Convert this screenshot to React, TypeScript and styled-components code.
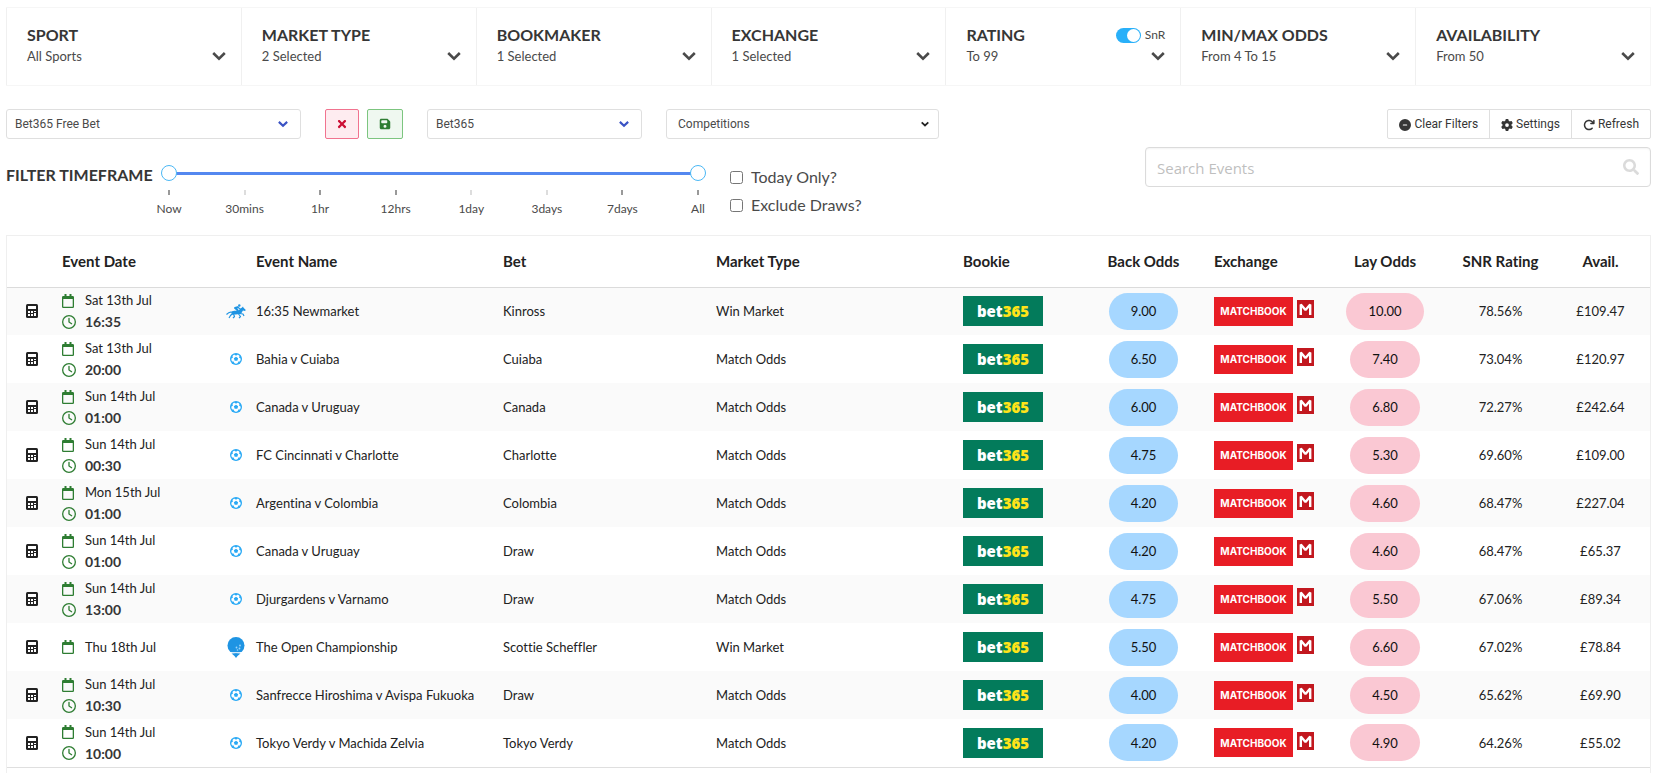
import React from 'react';
import styled, { createGlobalStyle, css } from 'styled-components';
import { FaTimes, FaSearch } from 'react-icons/fa';
import { FaCircleMinus, FaGear, FaFloppyDisk, FaArrowRotateRight, FaRegClock } from 'react-icons/fa6';

const GlobalStyle = createGlobalStyle`
  * { box-sizing: border-box; }
  body {
    margin: 0;
    background: #fff;
    color: #222;
    font: 13px/20px Lato, sans-serif;
    font-variant-ligatures: none;
  }
  button, input, select { font: inherit; color: inherit; margin: 0; }
`;

const Page = styled.main`
  padding: 7px 7px 0 6px;
`;

/* Filter cards */
const FilterBar = styled.section`
  display: grid;
  grid-template-columns: repeat(7, 1fr);
  height: 79px;
  border: 1px solid #f6f6f6;
  border-left: 0;
`;
const Card = styled.div`
  display: flex;
  justify-content: space-between;
  padding: 17px 15px 0 20px;
  border-left: 1px solid #f0f0f0;
`;
const CardTitle = styled.h2`
  margin: 0;
  font-size: 16px;
  line-height: 20px;
  font-weight: 700;
  color: #363636;
  white-space: nowrap;
`;
const CardValue = styled.p`
  margin: 0;
  font-size: 13px;
  line-height: 22px;
  color: #4a4a4a;
`;
const CardSide = styled.div`
  display: flex;
  flex-direction: column;
  align-items: flex-end;
`;
const SideTop = styled.div`
  height: 20px;
`;
const IconButton = styled.button`
  display: flex;
  align-items: center;
  height: 22px;
  padding: 0;
  border: 0;
  background: none;
  color: #4a4a4a;
  cursor: pointer;
`;
const SwitchLabel = styled.label`
  display: flex;
  align-items: center;
  gap: 4px;
  font-size: 12px;
  line-height: 20px;
  color: #4a4a4a;
`;
const Switch = styled.input`
  appearance: none;
  display: flex;
  width: 25px;
  height: 15px;
  padding: 1px;
  border-radius: 8px;
  background: #ccc;
  &::before {
    content: '';
    width: 13px;
    height: 13px;
    border-radius: 50%;
    background: #fff;
  }
  &:checked { background: #29b0f9; justify-content: flex-end; }
`;

/* Toolbar */
const Toolbar = styled.section`
  display: flex;
  align-items: center;
  margin-top: 23px;
  font: 12px/16px Roboto, sans-serif;
  color: #4a4a4a;
`;
const SelectWrap = styled.div<{ $width: number }>`
  position: relative;
  flex: 0 1 ${(p) => p.$width}px;
  margin-right: 24px;
`;
const Select = styled.select<{ $inset: number }>`
  appearance: none;
  display: block;
  width: 100%;
  height: 30px;
  padding: 0 28px 0 ${(p) => p.$inset}px;
  border: 1px solid #dfdfdf;
  border-radius: 3px;
  background: #fff;
`;
const SelectArrow = styled.span<{ $color: string; $right: number }>`
  position: absolute;
  top: 0;
  right: ${(p) => p.$right}px;
  height: 30px;
  display: flex;
  align-items: center;
  color: ${(p) => p.$color};
  pointer-events: none;
`;
const ToneButton = styled.button<{ $tone: 'red' | 'green' }>`
  display: flex;
  align-items: center;
  justify-content: center;
  width: ${(p) => (p.$tone === 'red' ? 34 : 36)}px;
  height: 30px;
  padding: 0;
  border-radius: 2px;
  ${(p) =>
    p.$tone === 'red'
      ? css`border: 1px solid #f1738f; background: #feecf0; color: #cc0f35;`
      : css`border: 1px solid #7cc57f; background: #eff8f0; color: #2e7d32;`}
`;
const ToneGroup = styled.div`
  display: flex;
  gap: 8px;
  margin-right: 24px;
`;
const Actions = styled.div`
  display: flex;
  margin-left: auto;
`;
const Action = styled.button`
  display: flex;
  align-items: center;
  gap: 3px;
  height: 30px;
  padding: 0 11px;
  border: 1px solid #dfdfdf;
  background: #fff;
  color: #363636;
  white-space: nowrap;
  svg { margin-top: 2px; }
  & + & { margin-left: -1px; }
  &:first-child { border-radius: 2px 0 0 2px; }
  &:last-child { border-radius: 0 2px 2px 0; }
`;

/* Timeframe */
const TimeRow = styled.section`
  display: flex;
  align-items: flex-start;
  height: 96px;
  padding-top: 8px;
`;
const TimeTitle = styled.h2`
  width: 155px;
  margin: 18px 0 0;
  font-size: 16px;
  line-height: 20px;
  font-weight: 700;
  color: #363636;
  white-space: nowrap;
`;
const Slider = styled.div`
  width: 545px;
  margin-top: 18px;
`;
const Track = styled.div`
  display: grid;
  align-items: center;
  height: 16px;
  background: linear-gradient(#5488f0, #5488f0) center / calc(100% - 16px) 3px no-repeat;
`;
const Range = styled.input`
  grid-area: 1 / 1;
  appearance: none;
  width: 100%;
  height: 16px;
  background: none;
  pointer-events: none;
  &::-webkit-slider-thumb {
    appearance: none;
    width: 16px;
    height: 16px;
    border: 1px solid #4bb8f5;
    border-radius: 50%;
    background: #fff;
    pointer-events: auto;
  }
`;
const Ticks = styled.ol`
  display: flex;
  justify-content: space-between;
  margin: 9px 0 0;
  padding: 0 8px;
  list-style: none;
`;
const Tick = styled.li<{ $strong: boolean }>`
  display: flex;
  flex-direction: column;
  align-items: center;
  gap: 6px;
  width: 0;
  font-size: 12px;
  line-height: 16px;
  color: #4a4a4a;
  &::before {
    content: '';
    width: 2px;
    height: 5px;
    background: ${(p) => (p.$strong ? '#999' : '#ddd')};
  }
`;
const Checks = styled.div`
  display: grid;
  gap: 8px;
  margin: 20px 0 0 24px;
`;
const Check = styled.label`
  display: flex;
  align-items: center;
  gap: 8px;
  font-size: 16px;
  line-height: 20px;
  color: #4a4a4a;
  input { width: 13px; height: 13px; }
`;
const Search = styled.label`
  display: flex;
  align-items: center;
  width: 506px;
  height: 40px;
  margin-left: auto;
  padding: 0 11px;
  border: 1px solid #dbdbdb;
  border-radius: 4px;
  color: #dbdbdb;
  box-shadow: inset 0 1px 2px rgba(10, 10, 10, 0.05);
`;
const SearchInput = styled.input`
  flex: 1;
  border: 0;
  padding: 2px 0 0;
  outline: 0;
  background: none;
  font: 15px/24px "Open Sans", sans-serif;
  color: #363636;
  &::placeholder { color: #bfbfbf; }
`;

/* Events table */
const TablePanel = styled.section`
  padding-bottom: 5px;
  border: 1px solid #efefef;
  border-bottom: 0;
`;
const Table = styled.table`
  width: 100%;
  table-layout: fixed;
  border-collapse: collapse;
`;
const Head = styled.th<{ $center?: boolean; $inset?: boolean }>`
  height: 51px;
  padding: 0 0 0 ${(p) => (p.$inset ? 30 : 0)}px;
  border-bottom: 1px solid #dbdbdb;
  text-align: ${(p) => (p.$center ? 'center' : 'left')};
  font-size: 15px;
  font-weight: 700;
  white-space: nowrap;
`;
const Row = styled.tr`
  height: 48px;
  &:nth-child(odd) { background: #fafafa; }
  &:last-child { border-bottom: 1px solid #dfdfdf; }
`;
const Cell = styled.td<{ $center?: boolean }>`
  padding: 0;
  text-align: ${(p) => (p.$center ? 'center' : 'left')};
  white-space: nowrap;
`;
const CalcButton = styled(IconButton)`
  margin-left: 19px;
  color: #222;
`;
const When = styled.div`
  display: flex;
  align-items: center;
  gap: 9px;
  line-height: 21px;
  svg { color: #2e7d32; }
`;
const Time = styled.time`
  font-size: 14px;
  font-weight: 700;
  color: #363636;
`;
const EventName = styled.div`
  display: flex;
  align-items: center;
  gap: 10px;
`;
const IconSlot = styled.span`
  display: flex;
  justify-content: center;
  width: 20px;
`;
const Pill = styled.button<{ $side: 'back' | 'lay' }>`
  height: 37px;
  padding: 0 22px;
  border: 0;
  border-radius: 19px;
  background: ${(p) => (p.$side === 'back' ? '#a6d7ff' : '#fac8d3')};
  color: #111;
`;
const Bookie = styled.div`
  display: flex;
  align-items: center;
  justify-content: center;
  width: 80px;
  height: 30px;
  background: #037b5b;
  color: #fff;
  font: 800 15px/20px "Open Sans", sans-serif;
  b { color: #ffe418; font-weight: 800; }
`;
const ExchangeLogos = styled.div`
  display: flex;
  align-items: center;
  gap: 4px;
  svg { margin-bottom: 4px; }
`;
const Matchbook = styled.span`
  display: flex;
  align-items: center;
  justify-content: center;
  width: 79px;
  height: 29px;
  background: #e81d25;
  color: #fff;
  font: 700 10px/14px Inter, sans-serif;
`;

const Chevron = ({ size, stroke = 2.6 }: { size: number; stroke?: number }) => (
  <svg width={size} height={size} viewBox="0 0 14 14" fill="none" stroke="currentColor" strokeWidth={stroke} aria-hidden>
    <path d="M1.2 4 7 9.6 12.8 4" />
  </svg>
);
const Calculator = () => (
  <svg width="12" height="14" viewBox="0 0 12 14" aria-hidden>
    <rect width="12" height="14" rx="1.5" fill="currentColor" />
    <path fill="#fff" d="M2 2h8v3H2ZM2 7h2v2H2ZM5 7h2v2H5ZM8 7h2v1H8ZM2 10h2v2H2ZM5 10h2v2H5ZM8 9h2v3H8Z" />
  </svg>
);
const Calendar = () => (
  <svg width="14" height="14" viewBox="0 0 14 14" aria-hidden>
    <path fill="currentColor" fillRule="evenodd" d="M2.500 0h2v2h3V0h2v2h1.200A1.300 1.300 0 0 1 12 3.300v9.400a1.300 1.300 0 0 1-1.300 1.300H1.300A1.300 1.300 0 0 1 0 12.700V3.300A1.300 1.300 0 0 1 1.300 2h1.200ZM1.300 5v7.700h9.400V5Z" />
  </svg>
);
const Football = () => (
  <svg width="12" height="12" viewBox="0 0 24 24" aria-label="Football">
    <circle cx="12" cy="12" r="12" fill="#29a9f5" />
    <circle cx="12" cy="12" r="9.400" fill="#fff" />
    <path fill="#29a9f5" d="m12 7.600 4.300 3.100-1.600 5H9.300l-1.600-5ZM7.400 2h9.200L12 5.400ZM1.200 11.500l2.900-8 1.700 6.200ZM22.800 11.500l-2.900-8-1.700 6.200ZM4 19.500l1.800-4 4.200 6.500ZM20 19.500l-1.800-4L14 22Z" />
  </svg>
);
const Horse = () => (
  <svg width="20" height="15" viewBox="0 0 20 15" aria-label="Horse racing">
    <g fill="#1e94e3">
      <path d="M5 8c2-1.500 4-1.200 6-1.200 2-.3 3-2.300 5-3.300l1-.9.5 1.200L19.800 6l-.8 1-2-.5c-1 1.500-1.500 3-3 3.500-3 .8-6 0-7.500 1Z" />
      <circle cx="13.300" cy="1.500" r="1.200" />
    </g>
    <g fill="none" stroke="#1e94e3" strokeLinejoin="round">
      <path strokeWidth="1.200" d="M5.500 8.300C3.500 7.500 2 9 .5 10.500M6.500 9.500l-2 2L3 14M7.500 10l1 2.500L7 14.200M13.500 9.500l3.500.5 1 2M12.500 10l2 2.500-1.500 1.700M12 3.500 14.500 5" />
      <path strokeWidth="1.900" d="M12.600 3 9 4l2.500 2-.7 2" />
    </g>
  </svg>
);
const Golf = () => (
  <svg width="18" height="21" viewBox="0 0 18 21" aria-label="Golf">
    <circle cx="9" cy="8.500" r="8.500" fill="#1e94e3" />
    <path fill="#fff" d="M3 15.200h12v1H3Z" />
    <path fill="#1e94e3" d="M4.500 16.500h9L10.500 19 9 21l-1.500-2Z" />
    <g fill="#9fd6fb"><circle cx="13" cy="8.500" r=".9" /><circle cx="9.500" cy="10.500" r=".9" /><circle cx="12.500" cy="11.500" r=".9" /><circle cx="10.500" cy="13" r=".8" /></g>
  </svg>
);
const MatchbookMark = () => (
  <svg width="17" height="18" viewBox="0 0 17 18" aria-hidden>
    <path fill="#c2181f" d="M0 0h17v18H0Z" />
    <path fill="none" stroke="#fff" strokeWidth="2.400" strokeLinejoin="bevel" d="M3.800 15V4.500l4.700 5.500 4.700-5.500V15" />
  </svg>
);

const sportIcons = { horse: <Horse />, football: <Football />, golf: <Golf /> };
type Sport = keyof typeof sportIcons;

const filters = [
  ['Sport', 'All Sports'],
  ['Market Type', '2 Selected'],
  ['Bookmaker', '1 Selected'],
  ['Exchange', '1 Selected'],
  ['Rating', 'To 99'],
  ['Min/Max Odds', 'From 4 To 15'],
  ['Availability', 'From 50'],
];
const stops = ['Now', '30mins', '1hr', '12hrs', '1day', '3days', '7days', 'All'];
const strongStops = ['Now', '1hr', '12hrs', '7days', 'All'];
const columnWidths = [55, 164, 277, 213, 247, 110, 141, 106, 130, 101, 99];

type EventRow = [string, string, Sport, string, string, string, string, string, string, string];
const events: EventRow[] = [
  ['Sat 13th Jul', '16:35', 'horse', '16:35 Newmarket', 'Kinross', 'Win Market', '9.00', '10.00', '78.56%', '£109.47'],
  ['Sat 13th Jul', '20:00', 'football', 'Bahia v Cuiaba', 'Cuiaba', 'Match Odds', '6.50', '7.40', '73.04%', '£120.97'],
  ['Sun 14th Jul', '01:00', 'football', 'Canada v Uruguay', 'Canada', 'Match Odds', '6.00', '6.80', '72.27%', '£242.64'],
  ['Sun 14th Jul', '00:30', 'football', 'FC Cincinnati v Charlotte', 'Charlotte', 'Match Odds', '4.75', '5.30', '69.60%', '£109.00'],
  ['Mon 15th Jul', '01:00', 'football', 'Argentina v Colombia', 'Colombia', 'Match Odds', '4.20', '4.60', '68.47%', '£227.04'],
  ['Sun 14th Jul', '01:00', 'football', 'Canada v Uruguay', 'Draw', 'Match Odds', '4.20', '4.60', '68.47%', '£65.37'],
  ['Sun 14th Jul', '13:00', 'football', 'Djurgardens v Varnamo', 'Draw', 'Match Odds', '4.75', '5.50', '67.06%', '£89.34'],
  ['Thu 18th Jul', '', 'golf', 'The Open Championship', 'Scottie Scheffler', 'Win Market', '5.50', '6.60', '67.02%', '£78.84'],
  ['Sun 14th Jul', '10:30', 'football', 'Sanfrecce Hiroshima v Avispa Fukuoka', 'Draw', 'Match Odds', '4.00', '4.50', '65.62%', '£69.90'],
  ['Sun 14th Jul', '10:00', 'football', 'Tokyo Verdy v Machida Zelvia', 'Tokyo Verdy', 'Match Odds', '4.20', '4.90', '64.26%', '£55.02'],
];

export default function App() {
  return (
    <Page>
      <GlobalStyle />
      <FilterBar>
        {filters.map(([title, value]) => (
          <Card key={title}>
            <div>
              <CardTitle>{title.toUpperCase()}</CardTitle>
              <CardValue>{value}</CardValue>
            </div>
            <CardSide>
              <SideTop>
                {title === 'Rating' && (
                  <SwitchLabel>
                    <Switch type="checkbox" role="switch" defaultChecked />
                    SnR
                  </SwitchLabel>
                )}
              </SideTop>
              <IconButton aria-label={`Open ${title}`}><Chevron size={14} /></IconButton>
            </CardSide>
          </Card>
        ))}
      </FilterBar>

      <Toolbar>
        <SelectWrap $width={295}>
          <Select $inset={8} aria-label="Saved filter"><option>Bet365 Free Bet</option></Select>
          <SelectArrow $color="#3b53c4" $right={13}><Chevron size={10} stroke={3} /></SelectArrow>
        </SelectWrap>
        <ToneGroup>
          <ToneButton $tone="red" aria-label="Delete filter"><FaTimes size={12} /></ToneButton>
          <ToneButton $tone="green" aria-label="Save filter"><FaFloppyDisk size={12} /></ToneButton>
        </ToneGroup>
        <SelectWrap $width={215}>
          <Select $inset={8} aria-label="Bookmaker"><option>Bet365</option></Select>
          <SelectArrow $color="#3b53c4" $right={13}><Chevron size={10} stroke={3} /></SelectArrow>
        </SelectWrap>
        <SelectWrap $width={273}>
          <Select $inset={11} aria-label="Competitions"><option>Competitions</option></Select>
          <SelectArrow $color="#222" $right={10}><Chevron size={8} stroke={3} /></SelectArrow>
        </SelectWrap>
        <Actions>
          <Action><FaCircleMinus size={12} />Clear Filters</Action>
          <Action><FaGear size={12} />Settings</Action>
          <Action><FaArrowRotateRight size={12} />Refresh</Action>
        </Actions>
      </Toolbar>

      <TimeRow>
        <TimeTitle>FILTER TIMEFRAME</TimeTitle>
        <Slider>
          <Track>
            <Range type="range" min={0} max={7} defaultValue={0} aria-label="Timeframe start" />
            <Range type="range" min={0} max={7} defaultValue={7} aria-label="Timeframe end" />
          </Track>
          <Ticks>
            {stops.map((s) => <Tick key={s} $strong={strongStops.includes(s)}>{s}</Tick>)}
          </Ticks>
        </Slider>
        <Checks>
          <Check><input type="checkbox" />Today Only?</Check>
          <Check><input type="checkbox" />Exclude Draws?</Check>
        </Checks>
        <Search>
          <SearchInput type="text" placeholder="Search Events" aria-label="Search Events" />
          <FaSearch size={16} />
        </Search>
      </TimeRow>

      <TablePanel>
        <Table>
          <colgroup>{columnWidths.map((w, i) => <col key={i} width={w} />)}</colgroup>
          <thead>
            <tr>
              <Head aria-label="Calculator" />
              <Head>Event Date</Head>
              <Head $inset>Event Name</Head>
              <Head>Bet</Head>
              <Head>Market Type</Head>
              <Head>Bookie</Head>
              <Head $center>Back Odds</Head>
              <Head>Exchange</Head>
              <Head $center>Lay Odds</Head>
              <Head $center>SNR Rating</Head>
              <Head $center>Avail.</Head>
            </tr>
          </thead>
          <tbody>
            {events.map(([date, time, sport, name, bet, market, back, lay, rating, avail]) => (
              <Row key={name + bet}>
                <Cell><CalcButton aria-label="Calculator"><Calculator /></CalcButton></Cell>
                <Cell>
                  <When><Calendar />{date}</When>
                  {time && <When><FaRegClock size={14} /><Time>{time}</Time></When>}
                </Cell>
                <Cell><EventName><IconSlot>{sportIcons[sport]}</IconSlot>{name}</EventName></Cell>
                <Cell>{bet}</Cell>
                <Cell>{market}</Cell>
                <Cell><Bookie><span>bet<b>365</b></span></Bookie></Cell>
                <Cell $center><Pill $side="back">{back}</Pill></Cell>
                <Cell><ExchangeLogos><Matchbook>MATCHBOOK</Matchbook><MatchbookMark /></ExchangeLogos></Cell>
                <Cell $center><Pill $side="lay">{lay}</Pill></Cell>
                <Cell $center>{rating}</Cell>
                <Cell $center>{avail}</Cell>
              </Row>
            ))}
          </tbody>
        </Table>
      </TablePanel>
    </Page>
  );
}
